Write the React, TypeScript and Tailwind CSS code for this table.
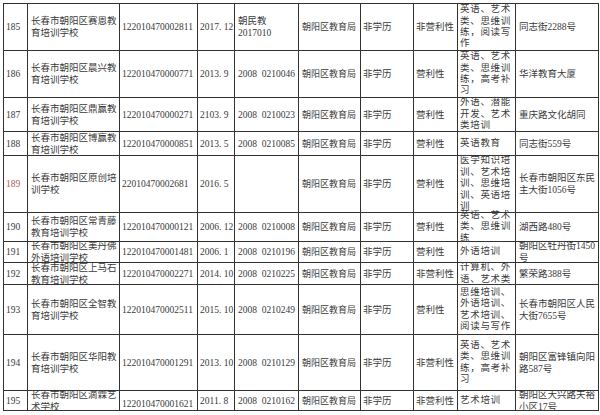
import React from "react";

type Row = {
  no: string;
  red?: boolean;
  name: string[];
  code: string;
  codeBottom?: boolean;
  date: string;
  permit: string[];
  kind: string;
  content: string[];
  addr: string[];
};

const rows: Row[] = [
  { no: "185", name: ["长春市朝阳区赛恩教", "育培训学校"], code: "122010470002811", date: "2017. 12", permit: ["朝民教", "2017010"], kind: "非营利性", content: ["英语、艺术", "类、思维训", "练，阅读写", "作"], addr: ["同志街2288号"] },
  { no: "186", name: ["长春市朝阳区晨兴教", "育培训学校"], code: "122010470000771", date: "2013. 9", permit: ["2008  0210046"], kind: "营利性", content: ["英语、艺术", "类、思维训", "练，高考补", "习"], addr: ["华洋教育大厦"] },
  { no: "187", name: ["长春市朝阳区鼎赢教", "育培训学校"], code: "122010470000271", date: "2103. 9", permit: ["2008  0210023"], kind: "营利性", content: ["外语、潜能", "开发、艺术", "类培训"], addr: ["重庆路文化胡同"] },
  { no: "188", name: ["长春市朝阳区博赢教", "育培训学校"], code: "122010470000851", date: "2013. 5", permit: ["2008  0210085"], kind: "营利性", content: ["英语教育"], addr: ["同志街559号"] },
  { no: "189", red: true, name: ["长春市朝阳区原创培", "训学校"], code: "22010470002681", date: "2016. 5", permit: [], kind: "营利性", content: ["医学知识培", "训、艺术培", "训、思维培", "训、英语培", "训"], addr: ["长春市朝阳区东民", "主大街1056号"] },
  { no: "190", name: ["长春市朝阳区常青藤", "教育培训学校"], code: "122010470000121", date: "2006. 12", permit: ["2008  0210008"], kind: "营利性", content: ["英语、艺术", "类、思维训", "练"], addr: ["湖西路480号"] },
  { no: "191", name: ["长春市朝阳区美丹佛", "外语培训学校"], code: "122010470001481", date: "2006. 1", permit: ["2008  0210196"], kind: "营利性", content: ["外语培训"], addr: ["朝阳区牡丹街1450", "号"] },
  { no: "192", name: ["长春市朝阳区上马石", "教育培训学校"], code: "122010470002271", date: "2014. 10", permit: ["2008  0210225"], kind: "非营利性", content: ["计算机、外", "语、艺术类"], addr: ["繁荣路388号"] },
  { no: "193", name: ["长春市朝阳区全智教", "育培训学校"], code: "122010470002511", date: "2015. 10", permit: ["2008  0210249"], kind: "营利性", content: ["思维培训、", "外语培训、", "艺术培训、", "阅读与写作"], addr: ["长春市朝阳区人民", "大街7655号"] },
  { no: "194", name: ["长春市朝阳区华阳教", "育培训学校"], code: "122010470001291", date: "2013. 10", permit: ["2008  0210129"], kind: "非营利性", content: ["英语、艺术", "类、思维训", "练，高考补", "习"], addr: ["朝阳区富锋镇向阳", "路587号"] },
  { no: "195", name: ["长春市朝阳区滴霖艺", "术学校"], code: "122010470001621", codeBottom: true, date: "2011. 8", permit: ["2008  0210162"], kind: "非营利性", content: ["艺术培训"], addr: ["朝阳区大兴路天裕", "小区17号"] },
];

const cell = "border-r border-b border-[#333333] flex flex-col justify-center whitespace-pre leading-[12px]";

function Lines({ lines }: { lines: string[] }) {
  return (
    <>
      {lines.map((l, i) => (
        <span key={i}>{l}</span>
      ))}
    </>
  );
}

export default function App() {
  return (
    <div
      className="w-[600px] h-[415px] bg-white pt-[3px] pl-[3px] overflow-hidden text-[#3a3a3a] text-[9.5px] antialiased"
      style={{ fontFamily: '"Liberation Serif", "Noto Sans CJK SC", serif' }}
    >
      <div className="w-[596px] border-l border-t border-[#333333] grid grid-cols-[24px_92px_78px_37px_64px_62px_53px_44px_58px_83px] grid-rows-[47px_47px_34px_24px_57px_29px_21px_22px_50px_56px_20px]">
        {rows.map((r) => (
          <React.Fragment key={r.no}>
            <div className={`${cell} pl-[2px] ${r.red ? "text-[#b0585a]" : ""}`}>{r.no}</div>
            <div className={`${cell} pl-[3px]`}>
              <Lines lines={r.name} />
            </div>
            <div className={`${cell} pl-[2px] ${r.codeBottom ? "!justify-end" : ""}`}>{r.code}</div>
            <div className={`${cell} pl-[2px]`}>{r.date}</div>
            <div className={`${cell} pl-[3px]`}>
              <Lines lines={r.permit} />
            </div>
            <div className={`${cell} pl-[3px] text-[9px]`}>朝阳区教育局</div>
            <div className={`${cell} pl-[2px]`}>非学历</div>
            <div className={`${cell} pl-[2px]`}>{r.kind}</div>
            <div className={`${cell} pl-[2px] tracking-[0.7px] !leading-[11.4px]`}>
              <Lines lines={r.content} />
            </div>
            <div className={`${cell} pl-[3px]`}>
              <Lines lines={r.addr} />
            </div>
          </React.Fragment>
        ))}
      </div>
    </div>
  );
}
